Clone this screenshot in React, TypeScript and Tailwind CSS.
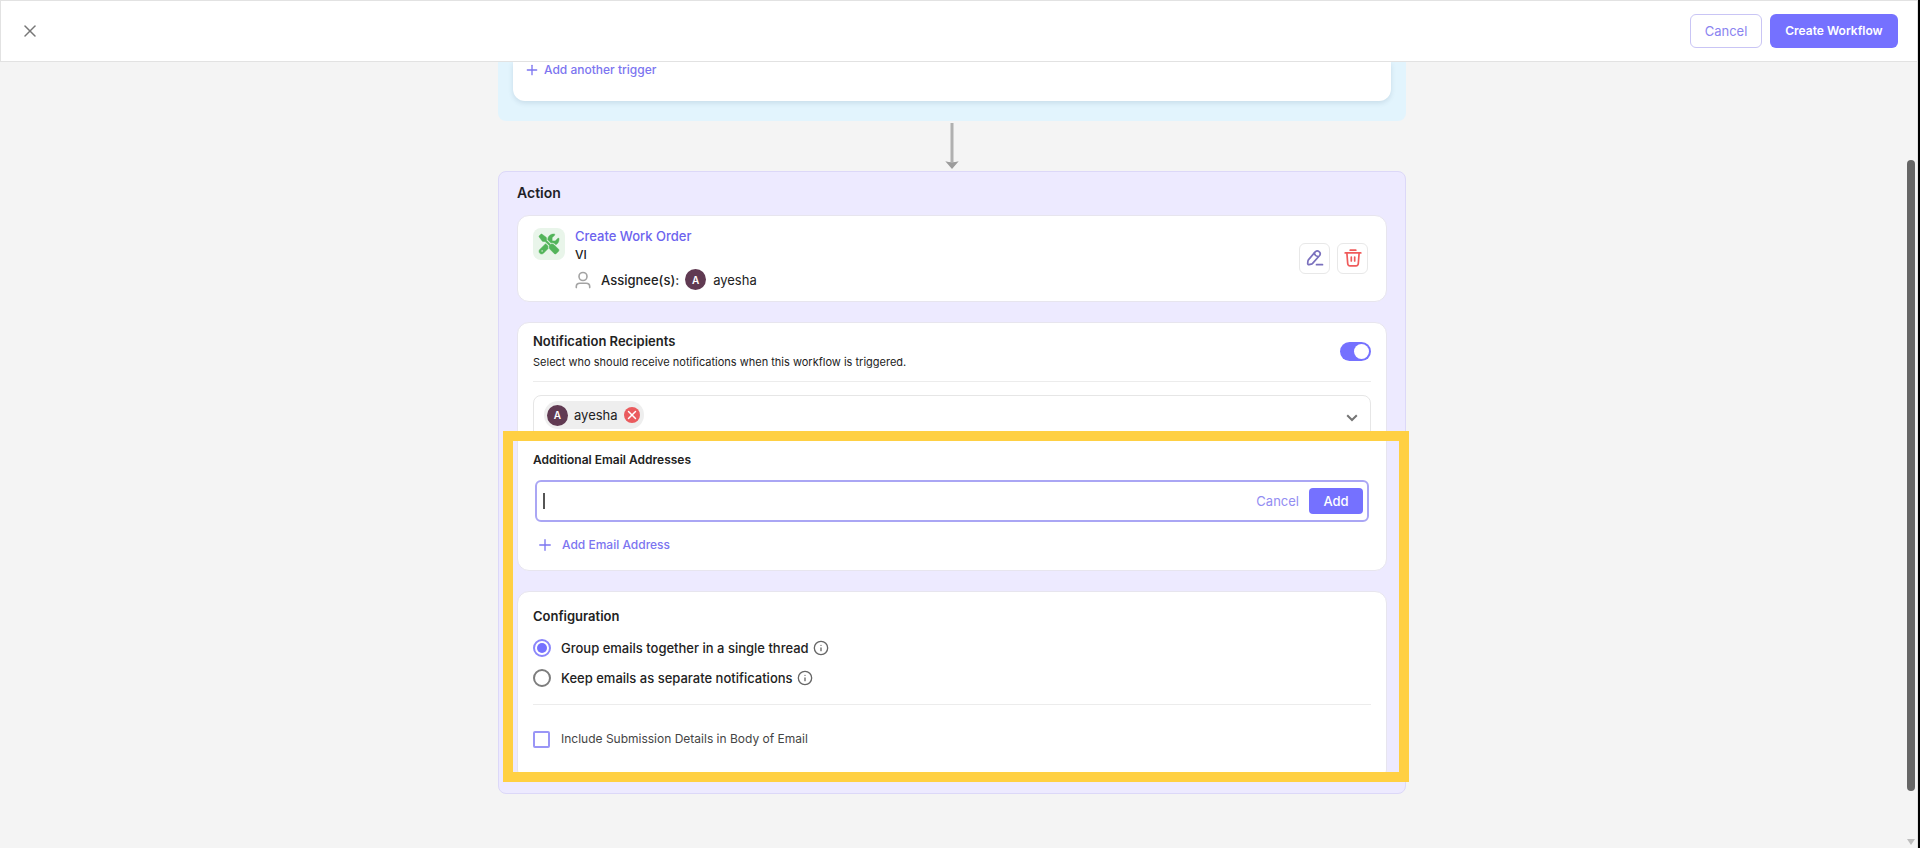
import React, { useState } from 'react';
import { Info, Plus, X } from 'lucide-react';
import { FaScrewdriverWrench } from 'react-icons/fa6';

interface CardProps {
  className?: string;
  children: React.ReactNode;
}

const Card: React.FC<CardProps> = ({ className = '', children }) => (
  <section className={`rounded-xl border border-[#e7e5ee] bg-white px-[15px] ${className}`}>
    {children}
  </section>
);

const Avatar: React.FC<{ letter: string }> = ({ letter }) => (
  <span className="flex size-[21px] shrink-0 items-center justify-center rounded-full bg-[#603a52] text-[10px] font-semibold text-white">
    {letter}
  </span>
);

const PenIcon = () => (
  <svg
    viewBox="0 0 18 18"
    className="size-[18px]"
    fill="none"
    stroke="#7a70bd"
    strokeWidth="1.7"
    strokeLinecap="round"
    strokeLinejoin="round"
  >
    <path d="M9.2 2.9 2.6 10.6c-.4.5-.6 1-.7 1.6l-.2 2.1c-.1.9.5 1.5 1.4 1.3l2.1-.4c.5-.1 1-.4 1.4-.8l6.8-7.6c1.1-1.3 1.3-2.7-.3-4.1-1.5-1.4-2.8-1-3.9.2Z" />
    <path d="M8.3 4.2c.4 1.9 1.9 3.2 3.8 3.5" />
    <path d="M10.5 15.7h6" />
  </svg>
);

const TrashIcon = () => (
  <svg
    viewBox="0 0 18 18"
    className="size-[18px]"
    fill="none"
    stroke="#ef5b5b"
    strokeWidth="1.7"
    strokeLinecap="round"
    strokeLinejoin="round"
  >
    <path d="M1.2 3.9h15.6" />
    <path d="M6.2 1.2h5.6" />
    <path d="M2.9 4.2l.8 10.3c.1 1.4.7 2.3 2.3 2.3h6c1.6 0 2.2-.9 2.3-2.3l.8-10.3" />
    <path d="M7.3 8v4M10.7 8v4" />
  </svg>
);

const UserIcon = () => (
  <svg
    viewBox="0 0 16 18"
    className="h-[18px] w-4 shrink-0"
    fill="none"
    stroke="#a3a3a3"
    strokeWidth="1.6"
    strokeLinecap="round"
  >
    <circle cx="8" cy="5.5" r="4" />
    <path d="M1.3 16.6v-1c0-2 1.6-3.3 3.6-3.3h6.2c2 0 3.6 1.3 3.6 3.3v1" />
  </svg>
);

const ArrowDown = () => (
  <svg viewBox="0 0 14 46" className="h-[46px] w-3.5" aria-hidden="true">
    <path d="M7 0v39" stroke="#b0b0b0" strokeWidth="3" />
    <path d="M.3 38.2Q7 40.5 13.7 38.2L7 46Z" fill="#9c9c9c" />
  </svg>
);

const deliveryModes = [
  { id: 'group', label: 'Group emails together in a single thread' },
  { id: 'separate', label: 'Keep emails as separate notifications' },
];

export default function App() {
  const [notify, setNotify] = useState(true);
  const [mode, setMode] = useState('group');
  const [includeDetails, setIncludeDetails] = useState(false);
  const [email, setEmail] = useState('');

  return (
    <div className="flex h-screen flex-col overflow-hidden border-r-2 border-black bg-[#f4f4f4] font-['Inter',sans-serif] text-[13px] leading-5 text-[#222]">
      <header className="flex h-[62px] shrink-0 items-center justify-between border border-[#e2e2e2] bg-white px-[19px]">
        <button type="button" aria-label="Close" className="text-[#777]">
          <X className="size-5" strokeWidth={1.8} />
        </button>
        <div className="flex gap-2">
          <button type="button" className="h-[34px] w-[72px] rounded-md border border-[#c9c5f5] text-[#8a84f0]">
            Cancel
          </button>
          <button type="button" className="h-[34px] w-32 rounded-md bg-[#7571ff] text-[12px] font-semibold text-white">
            Create Workflow
          </button>
        </div>
      </header>

      <div className="flex min-h-0 flex-1">
        <main className="flex min-w-0 flex-1 flex-col items-center overflow-hidden">
          {/* Trigger */}
          <div className="w-full max-w-[908px] shrink-0 rounded-b-lg bg-[#e2f4fd] px-[15px] pb-5">
            <div className="rounded-b-xl bg-white px-[11px] pb-[23px] shadow-[0_2px_5px_rgba(60,100,130,0.16)]">
              <button type="button" className="flex items-center gap-1 text-[12px] leading-4 font-medium text-[#7c75f0]">
                <Plus className="size-4" strokeWidth={2} />
                Add another trigger
              </button>
            </div>
          </div>

          <div className="py-0.5">
            <ArrowDown />
          </div>

          {/* Action */}
          <div className="relative w-full max-w-[908px] shrink-0 rounded-lg border border-[#dcd8f8] bg-[#edeaff] px-[18px] pb-[11px]">
            <h2 className="pt-[11px] pb-3 text-sm font-semibold text-[#1f1f28]">Action</h2>

            <Card className="flex items-center justify-between pt-2.5 pb-[11px]">
              <div className="flex gap-2.5">
                <span className="mt-0.5 flex size-8 shrink-0 items-center justify-center rounded-lg bg-[#e9f5ea]">
                  <FaScrewdriverWrench className="size-5 overflow-visible text-[#53b45a]" strokeWidth={12} />
                </span>
                <div>
                  <a href="#work-order" className="block font-medium text-[#6c63ee]">
                    Create Work Order
                  </a>
                  <p className="text-[12px] leading-[18px] font-medium">VI</p>
                  <div className="mt-[5px] flex items-center">
                    <UserIcon />
                    <span className="ml-2.5 font-medium">Assignee(s):</span>
                    <span className="mr-[7px] ml-1.5">
                      <Avatar letter="A" />
                    </span>
                    <span>ayesha</span>
                  </div>
                </div>
              </div>
              <div className="mr-[3px] flex gap-[7px]">
                <button type="button" aria-label="Edit" className="flex size-[31px] items-center justify-center rounded-md border border-[#e8e8e8]">
                  <PenIcon />
                </button>
                <button type="button" aria-label="Delete" className="flex size-[31px] items-center justify-center rounded-md border border-[#e8e8e8]">
                  <TrashIcon />
                </button>
              </div>
            </Card>

            <Card className="mt-5 pt-2 pb-[15px]">
              <div className="flex items-center justify-between border-b border-[#ececec] pb-[9px]">
                <div>
                  <h3 className="font-semibold">Notification Recipients</h3>
                  <p className="mt-px text-[11px]">
                    Select who should receive notifications when this workflow is triggered.
                  </p>
                </div>
                <input
                  type="checkbox"
                  role="switch"
                  aria-label="Notification Recipients"
                  checked={notify}
                  onChange={() => setNotify(!notify)}
                  className="flex h-[19px] w-[31px] appearance-none items-center rounded-full bg-[#b5b5b5] p-0.5 before:size-[15px] before:rounded-full before:bg-white checked:justify-end checked:bg-[#7571ff]"
                />
              </div>

              <div className="relative mt-[13px] flex h-11 rounded-lg border border-[#e6e6e6] px-2.5 pt-[5px]">
                <div className="flex h-7 items-center rounded-full bg-[#eeeeee] pr-1 pl-[3px]">
                  <Avatar letter="A" />
                  <span className="ml-1.5">ayesha</span>
                  <button
                    type="button"
                    aria-label="Remove ayesha"
                    className="ml-1.5 flex size-4 items-center justify-center rounded-full bg-[#ea5b5e] text-white"
                  >
                    <X className="size-3.5" strokeWidth={2.5} />
                  </button>
                </div>
                <select aria-label="Recipients" className="min-w-0 flex-1 appearance-none bg-transparent outline-none" />
                <svg
                  viewBox="0 0 12 8"
                  className="pointer-events-none absolute top-[18px] right-3 h-2 w-3"
                  fill="none"
                  stroke="#757575"
                  strokeWidth="2"
                >
                  <path d="M1.2 1.2 6 6l4.8-4.8" />
                </svg>
              </div>

              <label htmlFor="email" className="mt-[11px] block text-[12px] leading-5 font-semibold">
                Additional Email Addresses
              </label>
              <div className="mx-0.5 mt-2.5 flex h-[42px] items-center rounded-md border-2 border-[#aaa6f4] pr-1 pl-1.5">
                <span className="h-4 w-0.5 bg-[#555]" />
                <input
                  id="email"
                  type="email"
                  value={email}
                  onChange={(e) => setEmail(e.target.value)}
                  className="min-w-0 flex-1 outline-none"
                />
                <button type="button" className="mr-2.5 text-[#938df2]">
                  Cancel
                </button>
                <button type="button" className="h-[26px] w-[54px] rounded-sm bg-[#7571ff] font-medium text-white">
                  Add
                </button>
              </div>
              <button
                type="button"
                className="mt-[13px] ml-[3px] flex items-center gap-2 text-[12px] leading-5 font-medium text-[#7c75f0]"
              >
                <Plus className="size-[18px]" strokeWidth={1.8} />
                Add Email Address
              </button>
            </Card>

            <Card className="mt-5 pt-3.5 pb-8">
              <h3 className="font-semibold">Configuration</h3>
              <div className="mt-3 flex flex-col gap-2.5 border-b border-[#ececec] pb-4">
                {deliveryModes.map((item) => (
                  <div key={item.id} className="flex items-center">
                    <input
                      type="radio"
                      name="delivery"
                      id={item.id}
                      checked={mode === item.id}
                      onChange={() => setMode(item.id)}
                      className="flex size-[18px] appearance-none items-center justify-center rounded-full border-2 border-[#7d7d7d] before:size-2.5 before:rounded-full checked:border-[#8b86fa] checked:before:bg-[#7571ff]"
                    />
                    <label htmlFor={item.id} className="ml-2.5 font-medium">
                      {item.label}
                    </label>
                    <Info className="ml-1 size-4 text-[#666]" strokeWidth={2} />
                  </div>
                ))}
              </div>
              <div className="mt-6 flex items-center">
                <input
                  type="checkbox"
                  id="include-details"
                  checked={includeDetails}
                  onChange={() => setIncludeDetails(!includeDetails)}
                  className="size-[17px] appearance-none rounded-xs border-2 border-[#9a96f6] checked:bg-[#7571ff]"
                />
                <label htmlFor="include-details" className="ml-[11px] text-[12px] leading-5 text-[#444]">
                  Include Submission Details in Body of Email
                </label>
              </div>
            </Card>

            {/* Highlight frame over the email settings */}
            <div className="pointer-events-none absolute top-[259px] -right-1 bottom-[11px] left-1 border-[10px] border-[#ffd043]" />
          </div>
        </main>

        {/* Scrollbar */}
        <div className="flex w-3.5 shrink-0 flex-col items-center justify-between border-r border-[#e2e2e2] pt-[98px] pb-[3px] pl-px">
          <div className="mb-12 w-2 flex-1 rounded-full bg-[#666]" />
          <svg viewBox="0 0 8 6" className="h-1.5 w-2 shrink-0" fill="#bdbdbd">
            <path d="M0 0h8L4 6Z" />
          </svg>
        </div>
      </div>
    </div>
  );
}
